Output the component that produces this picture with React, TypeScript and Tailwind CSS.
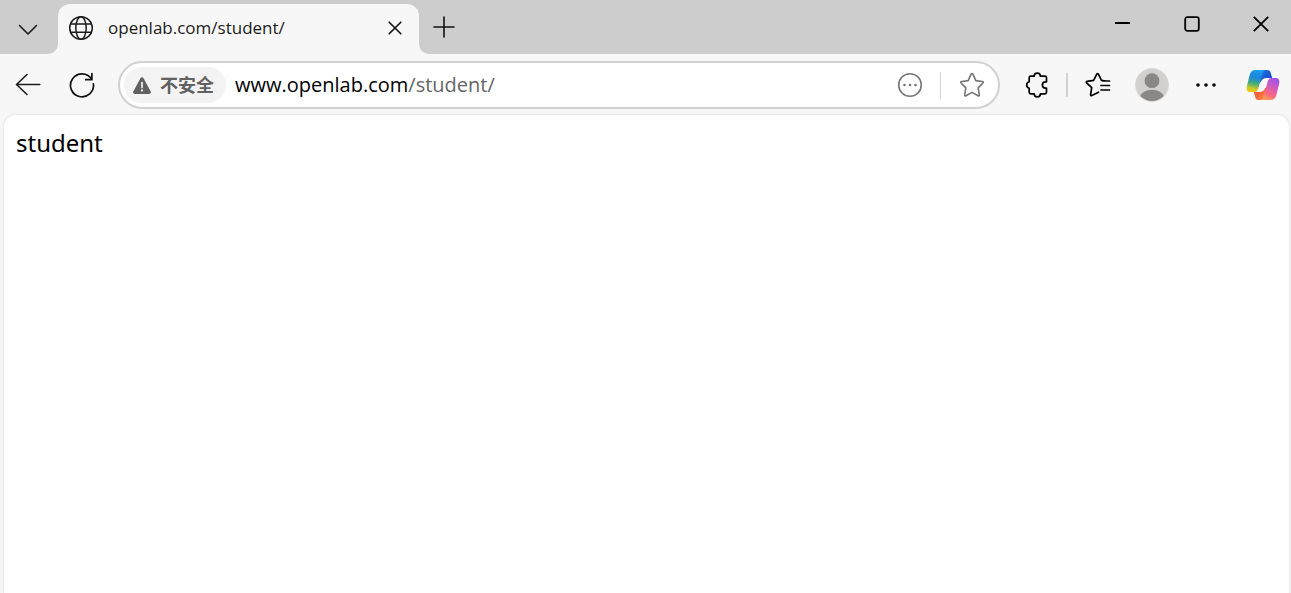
import { useState } from "react";
import type { ReactNode } from "react";

type IconButtonProps = { label: string; className: string; children: ReactNode };

function IconButton({ label, className, children }: IconButtonProps) {
  return (
    <button type="button" aria-label={label} className={`flex shrink-0 items-center justify-center ${className}`}>
      {children}
    </button>
  );
}

function CopilotLogo() {
  return (
    <svg width="34" height="32" viewBox="0 0 34 32" aria-hidden="true">
      <defs>
        <linearGradient id="cp-left" x1="0.55" y1="0" x2="0.35" y2="1">
          <stop offset="0" stopColor="#1a9cf0" />
          <stop offset="0.35" stopColor="#1b86d8" />
          <stop offset="0.62" stopColor="#43ad7c" />
          <stop offset="0.85" stopColor="#c4c828" />
          <stop offset="1" stopColor="#f8c80e" />
        </linearGradient>
        <linearGradient id="cp-top" x1="0" y1="0" x2="1" y2="0.8">
          <stop offset="0" stopColor="#1a96ee" />
          <stop offset="0.45" stopColor="#1a66da" />
          <stop offset="1" stopColor="#1540c4" />
        </linearGradient>
        <linearGradient id="cp-right" x1="0.7" y1="0" x2="0.3" y2="1">
          <stop offset="0" stopColor="#a152ec" />
          <stop offset="0.4" stopColor="#d45cb8" />
          <stop offset="0.7" stopColor="#fa6684" />
          <stop offset="1" stopColor="#ffa05a" />
        </linearGradient>
        <linearGradient id="cp-bottom" x1="0" y1="0" x2="1" y2="0.8">
          <stop offset="0" stopColor="#f4503a" />
          <stop offset="0.5" stopColor="#f5683c" />
          <stop offset="1" stopColor="#ffa04e" />
        </linearGradient>
      </defs>
      <path d="M10 1h11c2.200 0 3.100 1 3.600 2.600L26.200 9H21c-3.500 0-5.200 1.200-6.100 4L12 14z" fill="url(#cp-top)" />
      <path d="M24 31H13c-2.200 0-3.100-1-3.600-2.600L7.800 23H13c3.500 0 5.200-1.200 6.100-4l2.900-1z" fill="url(#cp-bottom)" />
      <path d="M9.500 1H20c-1.900.2-2.900 1.300-3.500 3.200L12.300 19.500C11.500 22 10.500 23 8 23H4.200C1.200 23 .2 20.800.8 17.500L3.500 6.500C4.500 2.800 6.300 1 9.500 1z" fill="url(#cp-left)" />
      <path d="M24.500 31H14c1.900-.2 2.900-1.300 3.500-3.200l4.200-15.300C22.500 10 23.500 9 26 9h3.800c3 0 4 2.200 3.400 5.500l-2.700 11c-1 3.700-2.800 5.500-6 5.500z" fill="url(#cp-right)" />
    </svg>
  );
}

function TabStrip() {
  return (
    <div className="flex h-[54px]">
      <div className="flex w-[58px] shrink-0 rounded-br-[10px] bg-[#cdcdcd]">
        <IconButton label="Tab actions" className="w-14 pt-1.5">
          <svg width="20" height="12" viewBox="0 0 20 12" fill="none" stroke="#1b1b1b" strokeWidth="1.600" strokeLinecap="round" strokeLinejoin="round" aria-hidden="true">
            <path d="M1.500 1.500 10 10l8.500-8.500" />
          </svg>
        </IconButton>
      </div>
      <div className="w-[361px] bg-[#cdcdcd] pt-1">
        <div className="flex h-full items-center rounded-t-[12px] bg-[#f7f7f7] pr-3 pb-0.5 pl-[10px]">
          <svg className="shrink-0" width="26" height="26" viewBox="0 0 26 26" fill="none" stroke="#1b1b1b" strokeWidth="1.500" aria-hidden="true">
            <circle cx="13" cy="13" r="11.300" />
            <ellipse cx="13" cy="13" rx="5.200" ry="11.300" />
            <path d="M2.700 9h20.600M2.700 17.300h20.600" />
          </svg>
          <span className="ml-[14px] flex-1 text-[17px] leading-6 text-[#1b1b1b]">openlab.com/student/</span>
          <IconButton label="Close tab" className="size-6">
            <svg width="14" height="14" viewBox="0 0 14 14" stroke="#111" strokeWidth="1.600" strokeLinecap="round" aria-hidden="true">
              <path d="M1.200 1.200l11.600 11.600M12.800 1.200 1.200 12.800" />
            </svg>
          </IconButton>
        </div>
      </div>
      <div className="flex flex-1 justify-between rounded-bl-[10px] bg-[#cdcdcd]">
        <IconButton label="New tab" className="w-[50px]">
          <svg width="22" height="22" viewBox="0 0 22 22" stroke="#111" strokeWidth="1.600" strokeLinecap="round" aria-hidden="true">
            <path d="M11 1v20M1 11h20" />
          </svg>
        </IconButton>
        <div className="flex h-12">
          <IconButton label="Minimize" className="w-[68px]">
            <svg width="16" height="16" viewBox="0 0 16 16" stroke="#000" strokeWidth="2" aria-hidden="true">
              <path d="M0 7h15" />
            </svg>
          </IconButton>
          <IconButton label="Maximize" className="w-[70px]">
            <svg width="16" height="16" viewBox="0 0 16 16" fill="none" stroke="#000" strokeWidth="1.800" aria-hidden="true">
              <rect x="1.200" y="1.200" width="13.600" height="13.600" rx="2" />
            </svg>
          </IconButton>
          <IconButton label="Close window" className="w-[64px] pl-1">
            <svg width="16" height="16" viewBox="0 0 16 16" stroke="#000" strokeWidth="1.800" aria-hidden="true">
              <path d="M.8.8l14.400 14.400M15.200.8.8 15.200" />
            </svg>
          </IconButton>
        </div>
      </div>
    </div>
  );
}

function AddressBar() {
  const [focused, setFocused] = useState(false);
  const [path, setPath] = useState("/student/");
  return (
    <div className="ml-[10px] flex h-12 min-w-0 flex-1 items-center rounded-full border-2 border-[#d1d1d1] bg-white pl-1">
      <button type="button" className="flex h-9 w-[102px] shrink-0 items-center rounded-full bg-[#f3f3f3] pl-[9px] text-[18px] leading-6 font-bold text-[#616161]">
        <svg width="18" height="17" viewBox="0 0 18 17" aria-hidden="true">
          <path d="M7.600 1.100a1.600 1.600 0 0 1 2.800 0l7.300 13.400a1.600 1.600 0 0 1-1.400 2.400H1.700a1.600 1.600 0 0 1-1.400-2.400z" fill="#616161" />
          <path d="M9 5.500v5" stroke="#f3f3f3" strokeWidth="1.700" strokeLinecap="round" />
          <circle cx="9" cy="13.400" r="1.100" fill="#f3f3f3" />
        </svg>
        <span className="ml-[9px] whitespace-nowrap">不安全</span>
      </button>
      <label className="ml-[9px] flex min-w-0 flex-1 items-center text-[20px] leading-7">
        <span className="text-black">www.openlab.com</span>
        <input
          aria-label="Address"
          value={path}
          onChange={(e) => setPath(e.target.value)}
          onFocus={() => setFocused(true)}
          onBlur={() => setFocused(false)}
          className={`min-w-0 flex-1 bg-transparent outline-none ${focused ? "text-black" : "text-[#666]"}`}
        />
      </label>
      <IconButton label="Site options" className="w-[60px]">
        <svg width="26" height="26" viewBox="0 0 26 26" fill="none" stroke="#767676" strokeWidth="1.600" aria-hidden="true">
          <circle cx="13" cy="13" r="11.300" />
          <g fill="#767676" stroke="none">
            <circle cx="7.500" cy="13" r="1.300" />
            <circle cx="13" cy="13" r="1.300" />
            <circle cx="18.500" cy="13" r="1.300" />
          </g>
        </svg>
      </IconButton>
      <span className="h-[27px] w-px shrink-0 bg-[#d1d1d1]" />
      <IconButton label="Add to favorites" className="w-[57px] pl-1">
        <svg width="26" height="26" viewBox="0 0 26 26" fill="none" stroke="#767676" strokeWidth="1.600" strokeLinejoin="round" aria-hidden="true">
          <path d="M12.100 2.200q.9-1.500 1.800 0l2.900 6.400 6.500.9q1.700.3.600 1.500l-4.700 4.900 1.100 6.900q.1 1.600-1.300 1L13 20.400l-6 3.400q-1.400.6-1.300-1l1.100-6.900L2.100 11q-1.100-1.200.6-1.500l6.500-.9z" />
        </svg>
      </IconButton>
    </div>
  );
}

function Toolbar() {
  return (
    <div className="flex h-[61px] items-center pt-px">
      <IconButton label="Back" className="h-12 w-14">
        <svg width="26" height="24" viewBox="0 0 26 24" fill="none" stroke="#1b1b1b" strokeWidth="1.600" strokeLinecap="round" strokeLinejoin="round" aria-hidden="true">
          <path d="M12 1.500 1.500 11.500 12 21.500M1.500 11.500h23.200" />
        </svg>
      </IconButton>
      <IconButton label="Refresh" className="h-12 w-[52px]">
        <svg width="26" height="26" viewBox="0 0 26 26" fill="none" stroke="#111" strokeWidth="1.700" strokeLinecap="round" strokeLinejoin="round" aria-hidden="true">
          <path d="M24.400 11.800A11.500 11.500 0 1 1 22.600 7M22.900 1.500v6.200h-6.200" />
        </svg>
      </IconButton>
      <AddressBar />
      <IconButton label="Extensions" className="ml-2 h-12 w-[58px]">
        <svg width="24" height="26" viewBox="0 0 24 26" fill="none" stroke="#000" strokeWidth="1.700" strokeLinejoin="round" aria-hidden="true">
          <path d="M9.200 4.200a3.100 3.100 0 0 1 6.200 0H20q1.500 0 1.500 1.500v4.100h-.9a3.200 3.200 0 0 0 0 6.400h.9v4.100q0 1.500-1.500 1.500h-4.600a3.100 3.100 0 0 1-6.200 0H5.700q-1.500 0-1.500-1.500v-4.100a3.300 3.300 0 0 1 0-6.400V5.700q0-1.500 1.500-1.500z" />
        </svg>
      </IconButton>
      <span className="h-6 w-0.5 shrink-0 bg-[#d1d1d1]" />
      <IconButton label="Favorites" className="h-12 w-[60px]">
        <svg width="26" height="26" viewBox="0 0 26 26" fill="none" stroke="#000" strokeWidth="1.700" strokeLinecap="round" strokeLinejoin="round" aria-hidden="true">
          <path d="M13.500 20.200 6.800 23.500q-1.300.5-1.200-1l1.100-6.900L1.600 10.800q-.9-1.200.5-1.500l6.500-1L11.800 2.200q.8-1.300 1.600 0l3.100 6.100 4.500.7M16 13.500h8.500M16 18h8.500M18 9h6.500" />
        </svg>
      </IconButton>
      <IconButton label="Profile" className="h-12 w-12">
        <svg width="34" height="34" viewBox="0 0 34 34" aria-hidden="true">
          <defs>
            <clipPath id="avatar-clip">
              <circle cx="17" cy="17" r="16" />
            </clipPath>
          </defs>
          <circle cx="17" cy="17" r="17" fill="#dddbd9" />
          <circle cx="17" cy="17" r="16" fill="#d2d0ce" />
          <g fill="#8a8886" clipPath="url(#avatar-clip)">
            <circle cx="17" cy="12.700" r="7.400" />
            <path d="M4.500 30c1.500-5.500 6.500-8.200 12.500-8.200S28 24.500 29.500 30v4h-25z" />
          </g>
        </svg>
      </IconButton>
      <IconButton label="Settings and more" className="h-12 w-[60px]">
        <svg width="20" height="4" viewBox="0 0 20 4" aria-hidden="true">
          <circle cx="2" cy="2" r="1.800" />
          <circle cx="10" cy="2" r="1.800" />
          <circle cx="18" cy="2" r="1.800" />
        </svg>
      </IconButton>
      <IconButton label="Copilot" className="h-12 w-[55px] pr-0.5">
        <CopilotLogo />
      </IconButton>
    </div>
  );
}

export default function App() {
  return (
    <div className="flex min-h-screen flex-col bg-[#f7f7f7]">
      <header className="font-['Open_Sans','Noto_Sans_CJK_SC',sans-serif]">
        <TabStrip />
        <Toolbar />
      </header>
      <main className="mr-0.5 ml-1 flex-1 rounded-t-[12px] bg-white px-3 pt-[11px] font-['Noto_Sans',sans-serif] text-[24px] leading-[34px] text-black shadow-[0_0_2px_1px_#e6e6e6]">
        student
      </main>
    </div>
  );
}
